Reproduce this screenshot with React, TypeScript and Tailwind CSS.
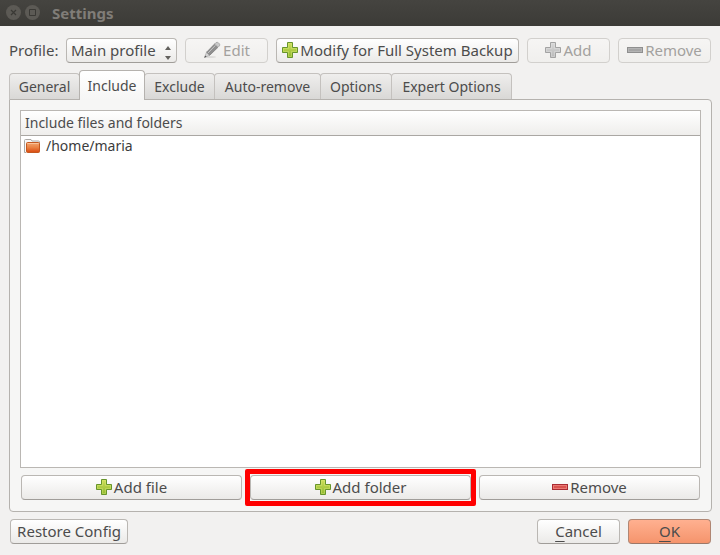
import { useState } from "react";
import type { ButtonHTMLAttributes } from "react";
import clsx from "clsx";

function PlusIcon({ muted = false }: { muted?: boolean }) {
  const id = muted ? "plus-muted" : "plus-green";
  return (
    <svg width="16" height="16" viewBox="0 0 16 16" className="shrink-0" aria-hidden="true">
      <defs>
        <linearGradient id={id} x1="0" y1="0" x2="0" y2="1">
          <stop offset="0" stopColor={muted ? "#d8d8d8" : "#cfdf5b"} />
          <stop offset="1" stopColor={muted ? "#b9b9b9" : "#8fb92f"} />
        </linearGradient>
      </defs>
      <path
        d="M5.5 0.5h5v5h5v5h-5v5h-5v-5h-5v-5h5z"
        fill={`url(#${id})`}
        stroke={muted ? "#a3a3a3" : "#67952b"}
        strokeLinejoin="round"
      />
      <path
        d="M6.5 1.5h3v5h5v3h-5v5h-3v-5h-5v-3h5z"
        fill="none"
        stroke={muted ? "#e6e6e6" : "#dcec7c"}
        strokeOpacity="0.4"
      />
    </svg>
  );
}

function MinusIcon({ muted = false }: { muted?: boolean }) {
  return (
    <svg width="16" height="16" viewBox="0 0 16 16" className="shrink-0" aria-hidden="true">
      <rect x="0.5" y="5.5" width="15" height="5" fill={muted ? "#a5a5a5" : "#d9534f"} stroke={muted ? "#8f8f8f" : "#a92b32"} />
      <rect x="1.5" y="6.5" width="13" height="3" fill="none" stroke={muted ? "#b4b4b4" : "#ea7a75"} />
    </svg>
  );
}

function PencilIcon() {
  return (
    <svg width="18" height="18" viewBox="0 0 18 18" className="shrink-0" aria-hidden="true">
      <ellipse cx="7" cy="16" rx="6" ry="1" fill="#dddcda" />
      <path d="M1.5 16.5 3.6 11.2 6.8 14.2z" fill="#d6d6d6" stroke="#a6a6a6" strokeWidth="0.7" />
      <path d="M1.3 16.7 2.2 14.4 3.6 15.7z" fill="#555555" />
      <path d="M3.6 11.2 11.5 3.1 15 6.3 6.8 14.2z" fill="#8f8f8f" stroke="#777777" strokeWidth="0.7" />
      <path d="M4.8 12.2 12.6 4.2" stroke="#c5c5c5" strokeWidth="1" />
      <path d="M11.5 3.1 13 1.6q1.2-.8 2.4.2l1 1q.9 1.1 0 2.1L15 6.3z" fill="#c9c9c9" stroke="#9a9a9a" strokeWidth="0.7" />
    </svg>
  );
}

function FolderIcon() {
  return (
    <svg width="16" height="15" viewBox="0 0 16 15" className="shrink-0" aria-hidden="true">
      <defs>
        <linearGradient id="folder-front" x1="0" y1="0" x2="0" y2="1">
          <stop offset="0" stopColor="#f3a873" />
          <stop offset="0.5" stopColor="#ea8142" />
          <stop offset="1" stopColor="#d9480f" />
        </linearGradient>
      </defs>
      <path d="M2 13.5H0.5V1.5q0-1 1-1H7l1 1.500h6.500q1 0 1 1V5" fill="#f7f7f7" stroke="#aaa8a5" />
      <rect x="2.500" y="3.500" width="13" height="10" rx="1" fill="url(#folder-front)" stroke="#c4581f" />
      <path d="M3.500 4.500h11" stroke="#fbd0ac" strokeOpacity="0.7" />
    </svg>
  );
}

type PushButtonProps = ButtonHTMLAttributes<HTMLButtonElement> & { primary?: boolean };

function PushButton({ primary, className, disabled, ...rest }: PushButtonProps) {
  return (
    <button
      type="button"
      disabled={disabled}
      className={clsx(
        "flex h-[25px] items-center justify-center gap-[2px] whitespace-nowrap rounded border pb-px text-[15px]",
        disabled && "border-[#d2d0cd] bg-linear-to-b from-[#f6f5f4] to-[#f0efed] text-[#a3a19e]",
        primary &&
          "border-[#b08673] border-b-[#9c7868] bg-linear-to-b from-[#ffb090] to-[#f5946c] text-[#4c4c4c]",
        !disabled && !primary && "border-[#bab7b3] border-b-[#a09d99] bg-linear-to-b from-white to-[#ebeae8]",
        className,
      )}
      {...rest}
    />
  );
}

const tabs = [
  { name: "General", width: "w-[71px]" },
  { name: "Include", width: "w-[66px]" },
  { name: "Exclude", width: "w-[71px]" },
  { name: "Auto-remove", width: "w-[107px]" },
  { name: "Options", width: "w-[72px]" },
  { name: "Expert Options", width: "w-[121px]" },
];

export default function App() {
  const [active, setActive] = useState("Include");

  return (
    <div className="flex min-h-screen flex-col bg-[#f2f1f0] font-['Noto_Sans','Open_Sans',sans-serif] text-sm leading-5 text-[#4c4c4c]">
      <header className="flex h-[26px] items-center gap-1 bg-linear-to-b from-[#454440] to-[#3c3b37] px-[6px] pb-px text-[#807d78]">
        <button type="button" aria-label="Close" className="size-[15px] rounded-full bg-[#5c5a55]">
          <svg viewBox="0 0 15 15" className="size-[15px]" stroke="#3a3935" strokeWidth="1.2" aria-hidden="true">
            <path d="M5 5l5 5M10 5l-5 5" />
          </svg>
        </button>
        <button type="button" aria-label="Maximize" className="size-[15px] rounded-full bg-[#5c5a55]">
          <svg viewBox="0 0 15 15" className="size-[15px]" fill="none" stroke="#3a3935" aria-hidden="true">
            <path d="M4.500 4.500h6v6h-6z" />
          </svg>
        </button>
        <h1 className="pl-2 text-[15px] font-bold">Settings</h1>
      </header>

      <main className="flex flex-1 flex-col pt-3 pr-2 pb-[11px] pl-[9px]">
        <div className="flex items-center gap-2 pr-px">
          <div className="flex items-center gap-[7px]">
            <label htmlFor="profile" className="w-[50px] pb-px text-[15px] whitespace-nowrap">
              Profile:
            </label>
            <div className="relative">
              <select
                id="profile"
                className="block h-[25px] w-[111px] appearance-none rounded border border-[#bab7b3] border-b-[#a09d99] bg-linear-to-b from-white to-[#ebeae8] pb-[2px] pl-1 text-[15px]"
              >
                <option>Main profile</option>
              </select>
              <svg
                width="6"
                height="14"
                viewBox="0 0 6 14"
                fill="#62605d"
                className="pointer-events-none absolute top-2 right-[6px]"
                aria-hidden="true"
              >
                <path d="M0 4 3 0l3 4zM0 10h6l-3 4z" />
              </svg>
            </div>
          </div>
          <PushButton disabled className="w-[83px]">
            <PencilIcon />
            Edit
          </PushButton>
          <PushButton className="flex-1">
            <PlusIcon />
            Modify for Full System Backup
          </PushButton>
          <PushButton disabled className="w-[83px]">
            <PlusIcon muted />
            Add
          </PushButton>
          <PushButton disabled className="w-[93px]">
            <MinusIcon muted />
            Remove
          </PushButton>
        </div>

        <div role="tablist" className="mt-[7px] flex h-[29px] items-end">
          {tabs.map((tab) => (
            <button
              key={tab.name}
              type="button"
              role="tab"
              aria-selected={active === tab.name}
              onClick={() => setActive(tab.name)}
              className={clsx(
                "-mr-px rounded-t border border-b-0 whitespace-nowrap last:mr-0",
                tab.width,
                active === tab.name
                  ? "relative -mb-px h-[30px] border-[#b5b2ae] bg-linear-to-b from-white to-[#f6f6f5]"
                  : "h-[26px] border-[#c4c1be] bg-linear-to-b from-[#efeeed] to-[#d9d8d6]",
              )}
            >
              {tab.name}
            </button>
          ))}
        </div>

        <section
          role="tabpanel"
          aria-label={active}
          className="flex flex-1 flex-col rounded-b rounded-tr border border-[#b5b2ae] bg-[#f6f6f5] px-[10px] pt-[10px] pb-[11px]"
        >
          <div className="flex-1 border border-[#bab7b3] bg-white">
            <table className="w-full border-separate border-spacing-0 text-left">
              <thead>
                <tr className="bg-linear-to-b from-white to-[#eeedeb]">
                  <th className="h-[25px] border-b border-[#aaa7a3] px-1 font-normal">Include files and folders</th>
                </tr>
              </thead>
              <tbody>
                <tr>
                  <td className="flex items-center gap-[6px] px-[3px] text-[#3c3c3c]">
                    <FolderIcon />
                    /home/maria
                  </td>
                </tr>
              </tbody>
            </table>
          </div>
          <div className="mt-[7px] grid grid-cols-3 gap-2 px-px">
            <PushButton>
              <PlusIcon />
              Add file
            </PushButton>
            <div className="relative grid">
              <PushButton>
                <PlusIcon />
                Add folder
              </PushButton>
              <span className="pointer-events-none absolute -inset-x-[5px] -inset-y-[6px] rounded-[2px] border-5 border-[#ff0000]" />
            </div>
            <PushButton>
              <MinusIcon />
              Remove
            </PushButton>
          </div>
        </section>

        <footer className="mt-[7px] flex gap-2 px-px">
          <PushButton className="mr-auto w-[118px]">Restore Config</PushButton>
          <PushButton className="w-[83px]">
            <span>
              <span className="underline decoration-1 underline-offset-4">C</span>ancel
            </span>
          </PushButton>
          <PushButton primary className="w-[83px]">
            <span>
              <span className="underline decoration-1 underline-offset-4">O</span>K
            </span>
          </PushButton>
        </footer>
      </main>
    </div>
  );
}
